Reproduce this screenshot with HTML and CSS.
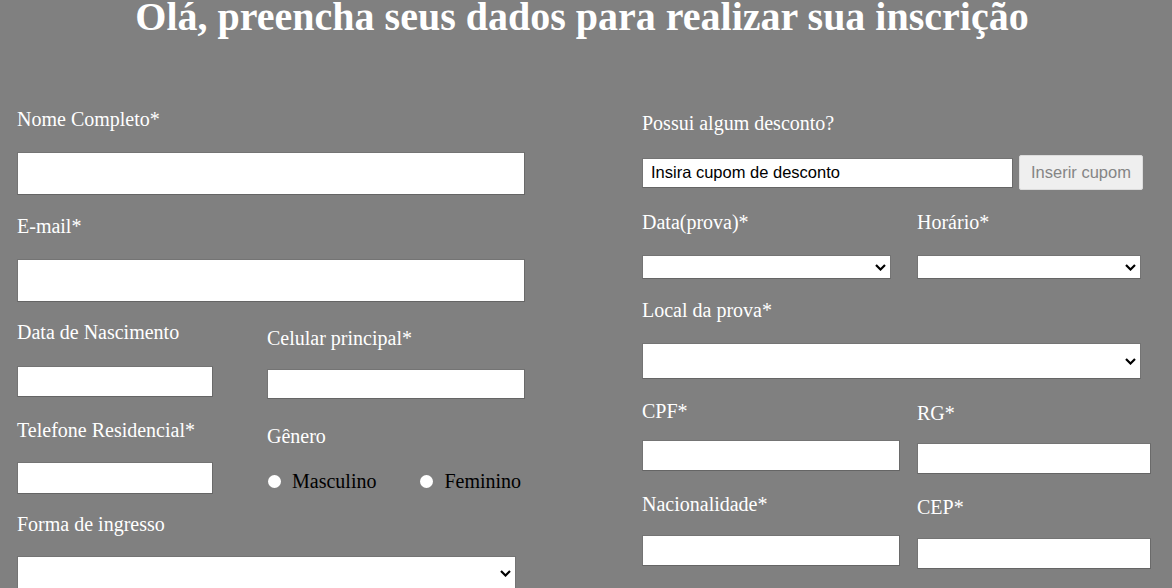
FILE: index.html
```html
<!DOCTYPE html>
<html lang="pt-BR">
<head>
<meta charset="utf-8">
<title>Inscrição</title>
<link rel="stylesheet" href="styles.css">
</head>
<body>
<h1 class="title">Olá, preencha seus dados para realizar sua inscrição</h1>
<form class="form">
  <div class="col col-left">
    <label class="lbl lbl-first">Nome Completo*</label>
    <input class="field field-big" type="text">
    <label class="lbl lbl-next">E-mail*</label>
    <input class="field field-big" type="email">

    <div class="pair pair-left">
      <div class="sub">
        <label class="lbl lbl-nasc">Data de Nascimento</label>
        <input class="field field-sm field-nasc" type="text">
        <label class="lbl lbl-tel">Telefone Residencial*</label>
        <input class="field field-sm field-tel" type="text">
      </div>
      <div class="sub sub-offset">
        <label class="lbl lbl-cel">Celular principal*</label>
        <input class="field field-cel" type="text">
        <label class="lbl lbl-gen">Gênero</label>
        <div class="radios">
          <label class="radio"><input type="radio" name="g" class="dot">Masculino</label>
          <label class="radio"><input type="radio" name="g" class="dot">Feminino</label>
        </div>
      </div>
    </div>

    <label class="lbl lbl-forma">Forma de ingresso</label>
    <div class="selwrap">
      <select class="sel sel-forma"><option></option></select>
      <svg class="chev" width="11" height="7" viewBox="0 0 11 7"><path d="M1 1 L5.5 5.5 L10 1" fill="none" stroke="#000" stroke-width="2.2"/></svg>
    </div>
  </div>

  <div class="col col-right">
    <label class="lbl">Possui algum desconto?</label>
    <div class="coupon">
      <input class="field coupon-input" type="text" value="Insira cupom de desconto">
      <button class="coupon-btn" type="button" disabled>Inserir cupom</button>
    </div>

    <div class="pair pair-right pair-date">
      <div class="sub">
        <label class="lbl">Data(prova)*</label>
        <div class="selwrap">
          <select class="sel sel-small sel-data"><option></option></select>
          <svg class="chev" width="11" height="7" viewBox="0 0 11 7"><path d="M1 1 L5.5 5.5 L10 1" fill="none" stroke="#000" stroke-width="2.2"/></svg>
        </div>
      </div>
      <div class="sub">
        <label class="lbl">Horário*</label>
        <div class="selwrap">
          <select class="sel sel-small sel-hora"><option></option></select>
          <svg class="chev" width="11" height="7" viewBox="0 0 11 7"><path d="M1 1 L5.5 5.5 L10 1" fill="none" stroke="#000" stroke-width="2.2"/></svg>
        </div>
      </div>
    </div>

    <label class="lbl lbl-local">Local da prova*</label>
    <div class="selwrap">
      <select class="sel sel-local"><option></option></select>
      <svg class="chev" width="11" height="7" viewBox="0 0 11 7"><path d="M1 1 L5.5 5.5 L10 1" fill="none" stroke="#000" stroke-width="2.2"/></svg>
    </div>

    <div class="pair pair-right pair-docs">
      <div class="sub">
        <label class="lbl lbl-cpf">CPF*</label>
        <input class="field field-doc field-a" type="text">
        <label class="lbl lbl-nac">Nacionalidade*</label>
        <input class="field field-doc field-a" type="text">
      </div>
      <div class="sub sub-doc-b">
        <label class="lbl lbl-rg">RG*</label>
        <input class="field field-doc field-b" type="text">
        <label class="lbl lbl-nac">CEP*</label>
        <input class="field field-doc field-b" type="text">
      </div>
    </div>
  </div>
</form>
</body>
</html>
```

FILE: styles.css
```css
html, body {
  margin: 0;
  padding: 0;
}

body {
  background: #808080;
  font-family: "Liberation Serif", "Times New Roman", serif;
  color: #ffffff;
  overflow: hidden;
  height: 588px;
}

.title {
  margin: -6px 0 0 0;
  padding-right: 8px;
  font-size: 40px;
  line-height: 46px;
  font-weight: bold;
  text-align: center;
  color: #ffffff;
}

.form {
  display: flex;
  align-items: flex-start;
  gap: 117px;
  padding-left: 17px;
  margin-top: 68px;
}

.col {
  display: flex;
  flex-direction: column;
  align-items: flex-start;
}

.col-left {
  width: 508px;
}

.col-right {
  width: 513px;
  margin-top: 4px;
}

.lbl {
  display: block;
  font-size: 20px;
  line-height: 23px;
  color: #ffffff;
  margin-bottom: 21px;
}

.lbl-next {
  margin-top: 20px;
}

.field {
  box-sizing: border-box;
  display: block;
  margin: 0;
  padding: 0 8px;
  background: #ffffff;
  border: 1px solid #747474;
  border-bottom-color: #656565;
  border-right-color: #6a6a6a;
  border-radius: 0;
  outline: none;
}

.field-big {
  width: 508px;
  height: 43px;
}

.pair {
  display: grid;
  align-items: start;
}

.pair-left {
  grid-template-columns: 250px 258px;
  margin-top: 19px;
}

.pair-right {
  grid-template-columns: 275px 234px;
}

.sub {
  display: flex;
  flex-direction: column;
  align-items: flex-start;
}

.lbl-nasc {
  margin-bottom: 22px;
}

.field-sm {
  width: 196px;
}

.field-nasc {
  height: 31px;
}

.lbl-tel {
  margin-top: 22px;
  margin-bottom: 20px;
}

.field-tel {
  height: 32px;
}

.sub-offset {
  padding-top: 6px;
}

.lbl-cel {
  margin-bottom: 19px;
}

.field-cel {
  width: 258px;
  height: 30px;
}

.lbl-gen {
  margin-top: 26px;
  margin-bottom: 22px;
}

.radios {
  display: flex;
  align-items: center;
  gap: 44px;
  height: 23px;
  padding-left: 1px;
}

.radio {
  display: flex;
  align-items: center;
  gap: 11px;
  font-size: 20px;
  line-height: 23px;
  color: #000000;
}

.dot {
  -webkit-appearance: none;
  appearance: none;
  margin: 0;
  width: 13px;
  height: 13px;
  border-radius: 50%;
  background: #ffffff;
  border: none;
}

.lbl-forma {
  margin-top: 19px;
  margin-bottom: 20px;
}

.selwrap {
  position: relative;
}

.chev {
  position: absolute;
  right: 5px;
  top: 50%;
  margin-top: -3px;
  pointer-events: none;
}

.sel {
  -webkit-appearance: none;
  appearance: none;
  box-sizing: border-box;
  display: block;
  margin: 0;
  background-color: #ffffff;
  border: 1px solid #747474;
  border-bottom-color: #656565;
  border-radius: 0;
  color: #000000;
  font-family: "Liberation Sans", Arial, sans-serif;
  font-size: 13px;
}

.sel-forma {
  width: 499px;
  height: 34px;
}

.coupon {
  display: flex;
  align-items: center;
  gap: 6px;
  margin-top: -1px;
}

.coupon-input {
  width: 371px;
  height: 30px;
  font-family: "Liberation Sans", Arial, sans-serif;
  font-size: 16.5px;
  color: #000000;
}

.coupon-btn {
  box-sizing: border-box;
  width: 124px;
  height: 35px;
  margin: 0;
  padding: 0;
  background: #efefef;
  border: 1px solid #dcdcdc;
  border-radius: 2px;
  font-family: "Liberation Sans", Arial, sans-serif;
  font-size: 16.5px;
  color: #858585;
}

.pair-date {
  margin-top: 21px;
}

.sel-small {
  height: 24px;
}

.sel-data {
  width: 249px;
}

.sel-hora {
  width: 224px;
}

.lbl-local {
  margin-top: 20px;
  margin-bottom: 21px;
}

.sel-local {
  width: 499px;
  height: 36px;
}

.pair-docs {
  margin-top: 21px;
  grid-template-columns: 275px 234px;
}

.lbl-cpf {
  margin-bottom: 17px;
}

.field-doc {
  height: 31px;
}

.field-a {
  width: 258px;
}

.field-b {
  width: 234px;
}

.sub-doc-b {
  padding-top: 2px;
}

.lbl-rg {
  margin-bottom: 18px;
}

.lbl-nac {
  margin-top: 22px;
  margin-bottom: 19px;
}
```
